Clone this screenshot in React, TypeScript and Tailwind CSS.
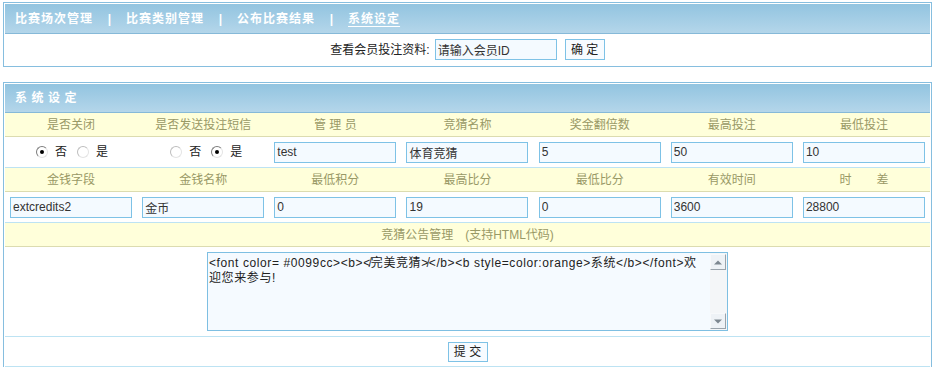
import React from 'react';

const inputCls =
  'h-[21px] w-[122px] border border-[#7ec2e6] bg-[#f4faff] px-[2px] text-[12px] text-[#333] outline-none';

const Radio: React.FC<{ checked?: boolean }> = ({ checked }) => (
  <span
    className={`relative inline-block h-[12px] w-[12px] rounded-full border bg-white ${
      checked ? 'border-[#7d7d7d]' : 'border-[#bdbdbd]'
    } border-b-[#e4e4e4] border-r-[#e4e4e4]`}
  >
    {checked && <span className="absolute left-[3px] top-[3px] h-[4px] w-[4px] rounded-full bg-black" />}
  </span>
);

const RadioPair: React.FC<{ yes: boolean; pad: string }> = ({ yes, pad }) => (
  <div className={`flex items-center justify-center text-[12px] text-[#222] ${pad}`}>
    <Radio checked={!yes} />
    <span className="ml-[7px]">否</span>
    <span className="ml-[10px] flex">
      <Radio checked={yes} />
    </span>
    <span className="ml-[7px]">是</span>
  </div>
);

const LabelRow: React.FC<{ labels: React.ReactNode[] }> = ({ labels }) => (
  <div className="grid h-[24px] grid-cols-7 border-b border-[#dcdcb0] bg-[#ffffda] text-[12px] text-[#999966]">
    {labels.map((l, i) => (
      <div key={i} className="flex items-center justify-center whitespace-pre">
        {l}
      </div>
    ))}
  </div>
);

const InputRow: React.FC<{ cells: React.ReactNode[] }> = ({ cells }) => (
  <div className="grid h-[31px] grid-cols-7 border-b border-[#bde3f3] bg-white">
    {cells.map((c, i) => (
      <div key={i} className="flex items-center justify-center">
        {c}
      </div>
    ))}
  </div>
);

const Field: React.FC<{ value: string }> = ({ value }) => (
  <input className={inputCls} value={value} readOnly />
);

const ScrollBtn: React.FC<{ up?: boolean }> = ({ up }) => (
  <div className="flex h-[16px] w-[16px] items-center justify-center border border-[#f7f9fb] border-b-[#9aa3ab] border-r-[#9aa3ab] bg-[#eef2f6]">
    <svg width="8" height="5" viewBox="0 0 8 5">
      {up ? <path d="M0 4.5 L4 0.5 L8 4.5 Z" fill="#7d8790" /> : <path d="M0 0.5 L4 4.5 L8 0.5 Z" fill="#7d8790" />}
    </svg>
  </div>
);

const headerCls =
  'flex items-center bg-linear-to-b from-[#92c4e0] to-[#b4d6ea] border-b border-[#86b9d8] pl-[10px] text-[12px] font-bold text-white';

export default function App() {
  return (
    <div className="min-h-[370px] bg-white pt-[2px] font-['Liberation_Sans','Noto_Sans_CJK_SC',sans-serif] text-[12px]">
      {/* top box: nav + member lookup */}
      <div className="ml-[3px] w-[929px] border border-[#86bedf] p-[1px]">
        <div className={`${headerCls} h-[30px]`}>
          <span className="tracking-[1px]">比赛场次管理</span>
          <span className="w-[33px] text-center">|</span>
          <span className="tracking-[1px]">比赛类别管理</span>
          <span className="w-[33px] text-center">|</span>
          <span className="tracking-[1px]">公布比赛结果</span>
          <span className="w-[33px] text-center">|</span>
          <span className="tracking-[1px] underline underline-offset-[3px]">系统设定</span>
        </div>
        <div className="flex h-[31px] items-center justify-center text-[#222]">
          <span>查看会员投注资料:</span>
          <input className={`${inputCls} ml-[5px]`} value="请输入会员ID" readOnly />
          <button className="ml-[8px] h-[21px] w-[40px] border border-[#7ec2e6] bg-[#f7fbff] text-[12px] text-[#222]">
            确 定
          </button>
        </div>
      </div>

      {/* settings box */}
      <div className="ml-[3px] mt-[15px] w-[929px] border border-b-0 border-[#86bedf] p-[1px] pb-0">
        <div className={`${headerCls} h-[29px] tracking-[4.5px]`}>系统设定</div>

        <LabelRow labels={['是否关闭', '是否发送投注短信', '管 理 员', '竞猜名称', '奖金翻倍数', '最高投注', '最低投注']} />
        <InputRow
          cells={[
            <RadioPair key="a" yes={false} pad="pl-[2px]" />,
            <RadioPair key="b" yes pad="pl-[6px]" />,
            <Field key="c" value="test" />,
            <Field key="d" value="体育竞猜" />,
            <Field key="e" value="5" />,
            <Field key="f" value="50" />,
            <Field key="g" value="10" />,
          ]}
        />
        <LabelRow
          labels={[
            '金钱字段',
            '金钱名称',
            '最低积分',
            '最高比分',
            '最低比分',
            '有效时间',
            <span key="t" className="flex gap-[25px]">
              <span>时</span>
              <span>差</span>
            </span>,
          ]}
        />
        <InputRow
          cells={[
            <Field key="a" value="extcredits2" />,
            <Field key="b" value="金币" />,
            <Field key="c" value="0" />,
            <Field key="d" value="19" />,
            <Field key="e" value="0" />,
            <Field key="f" value="3600" />,
            <Field key="g" value="28800" />,
          ]}
        />

        <div className="flex h-[24px] items-center justify-center border-b border-[#dcdcb0] bg-[#ffffda] text-[#999966]">
          <span>竞猜公告管理</span>
          <span className="ml-[12px]">(支持HTML代码)</span>
        </div>

        <div className="flex h-[90px] items-center justify-center border-b border-[#bde3f3]">
          <div className="flex h-[79px] w-[521px] border border-[#7ebfe2] bg-[#f5faff]">
            <div className="flex-1 overflow-hidden px-[1px] pt-[3px] text-[12px] leading-[15px] tracking-[0.6px] text-[#222]">
              <div className="whitespace-nowrap">
                {'<font color= #0099cc><b>≮完美竞猜≯</b><b style=color:orange>系统</b></font>欢'}
              </div>
              <div>迎您来参与!</div>
            </div>
            <div className="flex w-[17px] flex-col justify-between bg-[#f4f6f8] py-[1px] pr-[1px]">
              <ScrollBtn up />
              <ScrollBtn />
            </div>
          </div>
        </div>

        <div className="flex h-[30px] items-center justify-center border-b border-[#bde3f3]">
          <button className="h-[20px] w-[40px] border border-[#7ec2e6] bg-[#f7fbff] text-[12px] text-[#222]">
            提 交
          </button>
        </div>
      </div>
    </div>
  );
}
